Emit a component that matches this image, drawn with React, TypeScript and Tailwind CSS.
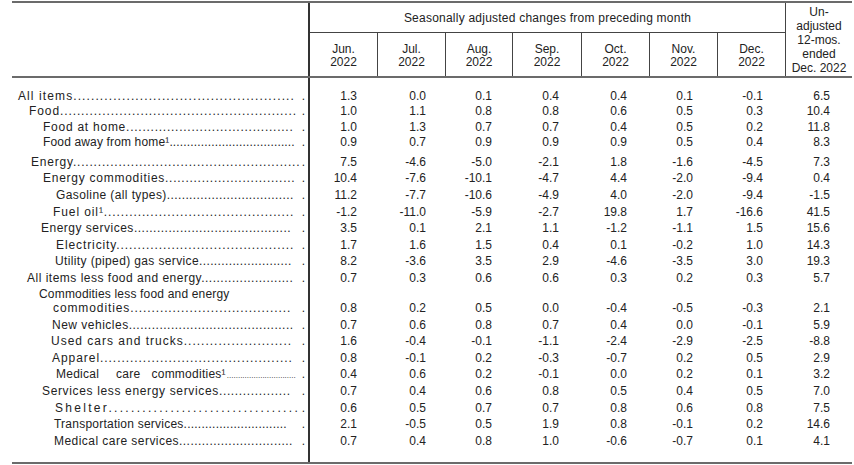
import React from 'react';

type Row = {
  label: string;
  pl: string;
  tr: string;
  dots: number;
  vals: string[];
  h: string;
  mt?: string;
};

const months = [
  { m: 'Jun.', w: 'w-[67px]' },
  { m: 'Jul.', w: 'w-[68px] border-l border-[#444]' },
  { m: 'Aug.', w: 'w-[67px] border-l border-[#444]' },
  { m: 'Sep.', w: 'w-[69px] border-l border-[#444]' },
  { m: 'Oct.', w: 'w-[68px] border-l border-[#444]' },
  { m: 'Nov.', w: 'w-[68px] border-l border-[#444]' },
  { m: 'Dec.', w: 'w-[68px] border-l border-[#444]' },
];

// body cells line up with header columns
const cols = [
  'w-[67px] pr-[20px]',
  'w-[68px] pr-[19px]',
  'w-[67px] pr-[20px]',
  'w-[69px] pr-[22px]',
  'w-[68px] pr-[22px]',
  'w-[68px] pr-[24px]',
  'w-[68px] pr-[22px]',
  'w-[67px] pr-[22px]',
];

const A = 'h-[15.6px] leading-[15.6px]';
const B = 'h-[16.6px] leading-[16.6px]';

const top: Row[] = [
  { label: 'All items', pl: 'pl-[6px]', tr: 'tracking-[1.1px]', dots: 50, h: A, vals: ['1.3', '0.0', '0.1', '0.4', '0.4', '0.1', '-0.1', '6.5'] },
  { label: 'Food', pl: 'pl-[17px]', tr: 'tracking-[0.9px]', dots: 56, h: A, vals: ['1.0', '1.1', '0.8', '0.8', '0.6', '0.5', '0.3', '10.4'] },
  { label: 'Food at home', pl: 'pl-[31px]', tr: 'tracking-[0.75px]', dots: 41, h: A, vals: ['1.0', '1.3', '0.7', '0.7', '0.4', '0.5', '0.2', '11.8'] },
  { label: 'Food away from home¹', pl: 'pl-[31px]', tr: 'tracking-[0.15px]', dots: 36, h: A, vals: ['0.9', '0.7', '0.9', '0.9', '0.9', '0.5', '0.4', '8.3'] },
  { label: 'Energy', pl: 'pl-[19px]', tr: 'tracking-[0.8px]', dots: 55, h: B, mt: 'mt-[3px]', vals: ['7.5', '-4.6', '-5.0', '-2.1', '1.8', '-1.6', '-4.5', '7.3'] },
  { label: 'Energy commodities', pl: 'pl-[31px]', tr: 'tracking-[0.74px]', dots: 32, h: B, vals: ['10.4', '-7.6', '-10.1', '-4.7', '4.4', '-2.0', '-9.4', '0.4'] },
  { label: 'Gasoline (all types)', pl: 'pl-[44px]', tr: 'tracking-[0.4px]', dots: 34, h: B, vals: ['11.2', '-7.7', '-10.6', '-4.9', '4.0', '-2.0', '-9.4', '-1.5'] },
  { label: 'Fuel oil¹', pl: 'pl-[41px]', tr: 'tracking-[0.9px]', dots: 45, h: B, vals: ['-1.2', '-11.0', '-5.9', '-2.7', '19.8', '1.7', '-16.6', '41.5'] },
  { label: 'Energy services', pl: 'pl-[29px]', tr: 'tracking-[0.5px]', dots: 41, h: B, vals: ['3.5', '0.1', '2.1', '1.1', '-1.2', '-1.1', '1.5', '15.6'] },
  { label: 'Electricity', pl: 'pl-[44px]', tr: 'tracking-[0.9px]', dots: 42, h: B, vals: ['1.7', '1.6', '1.5', '0.4', '0.1', '-0.2', '1.0', '14.3'] },
  { label: 'Utility (piped) gas service', pl: 'pl-[43px]', tr: 'tracking-[0.37px]', dots: 25, h: B, vals: ['8.2', '-3.6', '3.5', '2.9', '-4.6', '-3.5', '3.0', '19.3'] },
  { label: 'All items less food and energy', pl: 'pl-[15px]', tr: 'tracking-[0.5px]', dots: 24, h: B, vals: ['0.7', '0.3', '0.6', '0.6', '0.3', '0.2', '0.3', '5.7'] },
];

const commodityVals = ['0.8', '0.2', '0.5', '0.0', '-0.4', '-0.5', '-0.3', '2.1'];

const mid: Row[] = [
  { label: 'New vehicles', pl: 'pl-[40px]', tr: 'tracking-[0.5px]', dots: 43, h: B, mt: 'mt-[2px]', vals: ['0.7', '0.6', '0.8', '0.7', '0.4', '0.0', '-0.1', '5.9'] },
  { label: 'Used cars and trucks', pl: 'pl-[39px]', tr: 'tracking-[1px]', dots: 25, h: B, vals: ['1.6', '-0.4', '-0.1', '-1.1', '-2.4', '-2.9', '-2.5', '-8.8'] },
  { label: 'Apparel', pl: 'pl-[40px]', tr: 'tracking-[0.95px]', dots: 45, h: B, vals: ['0.8', '-0.1', '0.2', '-0.3', '-0.7', '0.2', '0.5', '2.9'] },
];

const medicalVals = ['0.4', '0.6', '0.2', '-0.1', '0.0', '0.2', '0.1', '3.2'];

const bottom: Row[] = [
  { label: 'Services less energy services', pl: 'pl-[30px]', tr: 'tracking-[0.65px]', dots: 18, h: B, vals: ['0.7', '0.4', '0.6', '0.8', '0.5', '0.4', '0.5', '7.0'] },
  { label: 'Shelter', pl: 'pl-[43px]', tr: 'tracking-[2.3px]', dots: 34, h: B, vals: ['0.6', '0.5', '0.7', '0.7', '0.8', '0.6', '0.8', '7.5'] },
  { label: 'Transportation services', pl: 'pl-[42px]', tr: 'tracking-[0.23px]', dots: 29, h: B, vals: ['2.1', '-0.5', '0.5', '1.9', '0.8', '-0.1', '0.2', '14.6'] },
  { label: 'Medical care services', pl: 'pl-[42px]', tr: 'tracking-[0.46px]', dots: 30, h: B, vals: ['0.7', '0.4', '0.8', '1.0', '-0.6', '-0.7', '0.1', '4.1'] },
];

const Label = ({ r }: { r: Row }) => (
  <div className={`flex items-baseline ${r.h} ${r.mt ?? ''} ${r.pl}`}>
    <span className={`whitespace-nowrap ${r.tr}`}>
      {r.label}
      {'.'.repeat(r.dots)}
    </span>
    <span className="ml-auto mr-[3px]">.</span>
  </div>
);

const Values = ({ vals, cls }: { vals: string[]; cls: string }) => (
  <div className={`flex items-baseline ${cls}`}>
    {vals.map((v, i) => (
      <span key={i} className={`text-right ${cols[i]}`}>
        {v}
      </span>
    ))}
  </div>
);

export default function App() {
  return (
    <div className="w-[854px] h-[465px] bg-white pt-[1px] pl-[12px] font-['Liberation_Sans',Arial,sans-serif] text-[12px] text-[#222]">
      <div className="w-[840px] border-t-2 border-b-2 border-[#6b6b6b]">
        {/* header */}
        <div className="flex h-[75px] border-b-2 border-[#6b6b6b]">
          <div className="w-[296px]" />
          <div className="flex border-l-2 border-[#333]">
            <div className="w-[475px] flex flex-col">
              <div className="h-[30px] border-b border-[#444] flex items-center justify-center tracking-[0.23px]">
                Seasonally adjusted changes from preceding month
              </div>
              <div className="flex h-[43px]">
                {months.map((c) => (
                  <div key={c.m} className={`${c.w} flex flex-col items-center justify-center pt-[2px] leading-[13px]`}>
                    <span>{c.m}</span>
                    <span>2022</span>
                  </div>
                ))}
              </div>
            </div>
            <div className="w-[67px] border-l border-[#444] flex flex-col items-center pt-[2px] leading-[14px]">
              <span>Un-</span>
              <span>adjusted</span>
              <span>12-mos.</span>
              <span>ended</span>
              <span>Dec. 2022</span>
            </div>
          </div>
        </div>

        {/* body */}
        <div className="flex h-[384px]">
          <div className="w-[296px] pt-[10.5px]">
            {top.map((r) => (
              <Label key={r.label} r={r} />
            ))}
            <div className="h-[28px] leading-[14px] flex flex-col">
              <span className="pl-[27px] tracking-[0.18px] whitespace-nowrap">Commodities less food and energy</span>
              <div className="flex items-baseline pl-[41px]">
                <span className="tracking-[0.9px] whitespace-nowrap">commodities{'.'.repeat(38)}</span>
                <span className="ml-auto mr-[3px]">.</span>
              </div>
            </div>
            {mid.map((r) => (
              <Label key={r.label} r={r} />
            ))}
            <div className={`flex items-baseline ${B} pl-[44px]`}>
              <span className="tracking-[0.25px]">Medical</span>
              <span className="ml-[17px] tracking-[0.25px]">care</span>
              <span className="ml-[11px] tracking-[0.25px]">commodities¹</span>
              <span className="ml-[1px] text-[8px] whitespace-nowrap">{'.'.repeat(31)}</span>
              <span className="ml-auto mr-[3px]">.</span>
            </div>
            {bottom.map((r) => (
              <Label key={r.label} r={r} />
            ))}
          </div>

          <div className="flex-1 border-l-2 border-[#333] pt-[10.5px]">
            {top.map((r) => (
              <Values key={r.label} vals={r.vals} cls={`${r.h} ${r.mt ?? ''}`} />
            ))}
            <div className="h-[28px] flex items-end">
              <Values vals={commodityVals} cls="h-[14px] leading-[14px]" />
            </div>
            {mid.map((r) => (
              <Values key={r.label} vals={r.vals} cls={`${r.h} ${r.mt ?? ''}`} />
            ))}
            <Values vals={medicalVals} cls={B} />
            {bottom.map((r) => (
              <Values key={r.label} vals={r.vals} cls={`${r.h} ${r.mt ?? ''}`} />
            ))}
          </div>
        </div>
      </div>
    </div>
  );
}
